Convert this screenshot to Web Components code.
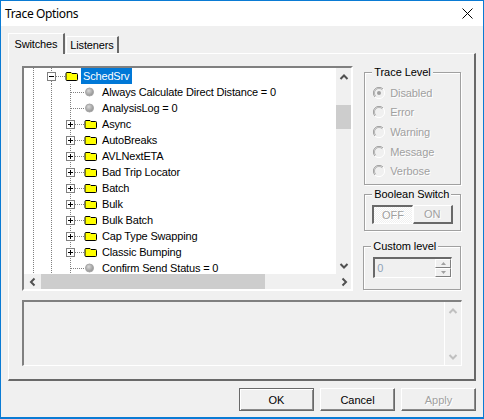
<!DOCTYPE html>
<html><head><meta charset="utf-8">
<style>
html,body{margin:0;padding:0;background:#f0f0f0}
body{font:11px "Liberation Sans",sans-serif;color:#000}
</style></head><body>
<trace-dialog></trace-dialog>
<script>
const FONT='"Liberation Sans",sans-serif';
function el(name,tpl){customElements.define(name,class extends HTMLElement{
  connectedCallback(){ if(this.shadowRoot)return; const s=this.attachShadow({mode:'open'}); s.innerHTML=tpl(this);}
});}
const dot='fill="none" stroke="#808080" stroke-dasharray="1 1"';
el('tree-row',h=>{
  const k=h.getAttribute('kind'),l=h.getAttribute('label');
  let svg='',w=78;
  const V=x=>`<path d="M${x} 0V16" ${dot}/>`;
  const H=(a,b)=>`<path d="M${a} 8.5H${b}" ${dot}/>`;
  const box=(cx,minus)=>`<rect x="${cx-4}" y="4.5" width="8" height="8" fill="#fff" stroke="#808080"/><path d="M${cx-2.5} 8.5h5${minus?'':`M${cx} 6v5`}" stroke="#000" fill="none"/>`;
  const folder=x=>`<path d="M${x+1} 12.5h9.5a1 1 0 0 0 1-1v-5a1 1 0 0 0-1-1h-4.5l-1-1h-4a1 1 0 0 0-1 1v6a1 1 0 0 0 1 1z" fill="#ff0" stroke="#000"/>`;
  if(k==='root'){w=57;svg=V(9.5)+`<path d="M27.5 0V4" ${dot}/><path d="M27.5 13V16" ${dot}/>`+H(32,42)+box(27.5,true)+folder(42);}
  else if(k==='folder'){svg=V(9.5)+V(27.5)+V(46.5)+H(51,60)+box(46.5,false)+folder(61);}
  else{svg=V(9.5)+V(27.5)+V(46.5)+H(47,60)+`<defs><radialGradient id="b" cx=".4" cy=".35" r=".7"><stop offset="0" stop-color="#d8d8d8"/><stop offset="1" stop-color="#8c8c8c"/></radialGradient></defs><circle cx="65.5" cy="8" r="4" fill="url(#b)" stroke="#a8a8a8"/>`;}
  return `<style>:host{display:flex;height:16px;align-items:stretch}
  svg{flex:none;display:block}
  .t{font:var(--tree-font);letter-spacing:-.17px;line-height:16px;white-space:nowrap;padding:0 ${k==='root'?'2px':'0'};${k==='root'?'background:#0078d7;color:#fff;width:47px;':''}}
  </style><svg width="${w}" height="16">${svg}</svg><span class="t">${l}</span>`;
});
const chev={up:'M-3.5 3L0 -.5L3.5 3',down:'M-3.5 -2L0 1.5L3.5 -2',left:'M2.5 -3.5L-1 0L2.5 3.5',right:'M-1.5 -3.5L2 0L-1.5 3.5'};
el('scroll-arrow',h=>{
  const d=h.getAttribute('dir'),dis=h.hasAttribute('disabled');
  return `<style>:host{display:block;flex:none;width:var(--sbw,16px);height:16px}svg{display:block}</style>
  <svg width="16" height="16" viewBox="-8 -8 16 16"><path d="${chev[d]}" fill="none" stroke="${dis?'#c0c0c0':'#505050'}" stroke-width="2"/></svg>`;
});
el('v-scroll',h=>{
  const dis=h.hasAttribute('disabled');const before=h.getAttribute('before')||0,th=h.getAttribute('thumb')||0;
  return `<style>:host{display:flex;flex-direction:column;width:var(--sbw,16px);background:#f0f0f0;flex:none}
  .b{height:${before}px}.th{height:${th}px;background:#cdcdcd}.f{flex:1}</style>
  <scroll-arrow dir="up" ${dis?'disabled':''}></scroll-arrow><div class="b"></div>${th>0?'<div class="th"></div>':''}<div class="f"></div><scroll-arrow dir="down" ${dis?'disabled':''}></scroll-arrow>`;
});
el('h-scroll',h=>`<style>:host{display:flex;height:15px;background:#f0f0f0;align-items:center;overflow:hidden}
  .th{height:15px;background:#cdcdcd;width:${h.getAttribute('thumb')}px;margin-left:2px}.f{flex:1}</style>
  <scroll-arrow dir="left"></scroll-arrow><div class="th"></div><div class="f"></div><scroll-arrow dir="right"></scroll-arrow>`);
el('group-box',h=>`<style>:host{display:block;font:var(--ui-font)}
  fieldset{margin:0;padding:0;border:1px solid #a0a0a0;box-shadow:1px 1px 0 #fff,inset 1px 1px 0 #fff;min-width:0;box-sizing:border-box;height:100%}
  legend{margin-left:7px;padding:0 2px;line-height:14px;background:#f0f0f0;letter-spacing:-.05px}
  </style><fieldset><legend>${h.getAttribute('title')}</legend><slot></slot></fieldset>`);
el('radio-opt',h=>{
  const c=h.hasAttribute('checked');
  return `<style>:host{display:flex;align-items:center;height:19.6px;font:var(--ui-font);letter-spacing:-.1px;color:#a0a0a0;text-shadow:1px 1px 0 #fff;gap:5px}svg{flex:none}</style>
  <svg width="12" height="12"><path d="M2 10A5.6 5.6 0 0 1 10 2" fill="none" stroke="#a0a0a0"/><path d="M2.8 9.2A4.5 4.5 0 0 1 9.2 2.8" fill="none" stroke="#707070" stroke-opacity=".45"/><path d="M10 2A5.6 5.6 0 0 1 2 10" fill="none" stroke="#fff"/>${c?'<circle cx="6" cy="6" r="2" fill="#a0a0a0"/>':''}</svg><span>${h.getAttribute('label')}</span>`;
});
el('toggle-btn',h=>{
  const p=h.hasAttribute('pressed');
  return `<style>:host{display:flex;align-items:center;justify-content:center;box-sizing:border-box;height:19px;flex:1;font:var(--ui-font);color:#a0a0a0;text-shadow:1px 1px 0 #fff;
  ${p?'background:repeating-conic-gradient(#fff 0 25%,#f0f0f0 0 50%) 0 0/2px 2px;border-style:solid;border-width:2px 1px 1px 2px;border-color:#696969 #fff #fff #696969;':
  'border-style:solid;border-width:1px 2px 2px 1px;border-color:#fff #696969 #696969 #fff;'}}</style>${h.getAttribute('label')}`;
});
el('spin-edit',h=>`<style>:host{display:flex;box-sizing:border-box;height:21px;border-style:solid;border-width:2px 1px 1px 2px;border-color:#696969 #fff #fff #696969;font:var(--ui-font);color:#8fa3b8;align-items:center;padding-left:2px}
  .v{flex:1}.s{display:flex;flex-direction:column;width:16px;height:18px;align-self:flex-start}
  .s div{box-sizing:border-box;height:9px;border-style:solid;border-width:1px;border-color:#fff #808080 #808080 #fff;display:flex;align-items:center;justify-content:center}
  svg{display:block}</style><span class="v">0</span><div class="s"><div><svg width="5" height="3"><path d="M2.5 0L5 3H0z" fill="#a0a0a0"/></svg></div><div><svg width="5" height="3"><path d="M0 0H5L2.5 3z" fill="#a0a0a0"/></svg></div></div>`);
el('push-btn',h=>{
  const dis=h.hasAttribute('disabled'),d=h.hasAttribute('default');
  return `<style>:host{display:flex;align-items:center;justify-content:center;box-sizing:border-box;width:75px;height:23px;font:var(--btn-font);background:#f0f0f0;
  border:1px solid;border-color:${d?'#696969':'#fff'} #696969 #696969 ${d?'#696969':'#fff'};box-shadow:${d?'inset 1px 1px 0 #fff,':''}inset -1px -1px 0 #8a8a8a;
  ${dis?'color:#a0a0a0;text-shadow:1px 1px 0 #fff;':''}}</style><slot></slot>`;
});
el('trace-dialog',()=>{
  const rows=[['root','SchedSrv'],['leaf','Always Calculate Direct Distance = 0'],['leaf','AnalysisLog = 0'],['folder','Async'],['folder','AutoBreaks'],['folder','AVLNextETA'],['folder','Bad Trip Locator'],['folder','Batch'],['folder','Bulk'],['folder','Bulk Batch'],['folder','Cap Type Swapping'],['folder','Classic Bumping'],['leaf','Confirm Send Status = 0']];
  return `<style>
  :host{display:flex;flex-direction:column;box-sizing:border-box;width:484px;height:419px;border:1px solid #0a7bd4;border-bottom-width:2px;background:#f0f0f0;
    --ui-font:11px ${FONT};--tree-font:11px ${FONT};--btn-font:11px ${FONT}}
  .title{flex:none;height:25px;background:#fff;display:flex;align-items:center;justify-content:space-between;padding:0 10px 0 4px;font:12px "Noto Sans",sans-serif;letter-spacing:-.35px}
  .tabs{flex:none;display:flex;align-items:flex-end;margin:7px 0 0 7px;height:20px;font:var(--btn-font);letter-spacing:-.15px}
  .tab{box-sizing:border-box;display:flex;align-items:center;justify-content:center;border-style:solid;border-width:1px 2px 0 1px;border-color:#fff #696969 #fff #fff}
  .tab.on{width:57px;height:21px;margin-bottom:-1px;position:relative;z-index:1;background:#f0f0f0}
  .tab.off{width:53px;height:17px;margin-left:1px}
  .panel{flex:none;box-sizing:border-box;margin:0 7px;height:328px;border-style:solid;border-width:1px 2px 2px 1px;border-color:#fff #696969 #696969 #fff;padding:12px 13px 0 13px;display:flex;flex-direction:column;gap:9px}
  .top{display:flex;height:225px;gap:11px}
  .tree{box-sizing:border-box;width:332px;height:225px;display:flex;flex-direction:column;border-style:solid;border-width:2px;border-color:#808080 #fff #fff #808080;--sbw:15px}
  .mid{flex:1;display:flex;min-height:0}
  .rows{flex:1;background:#fff;overflow:hidden;min-width:0}
  .side{width:97px;display:flex;flex-direction:column;margin-top:-1px}
  .tl{height:120px}.bs{height:44px;margin-top:2px}.cl{height:51px;margin-top:8px;margin-left:-1px}
  .radios{padding:0 0 0 8px;margin-top:4px}
  .tog{display:flex;margin:4px 7px 0 7px}
  .ed{margin:4px 8px 0 9px}
  .log{box-sizing:border-box;height:66px;width:440px;display:flex;justify-content:flex-end;border-style:solid;border-width:2px 1px 1px 2px;border-color:#808080 #fff #fff #808080}
  .log v-scroll{border-left:1px solid #fff}
  .foot{flex:none;display:flex;justify-content:flex-end;gap:6px;margin:7px 7px 0 0}
  </style>
  <div class="title"><span>Trace Options</span><svg width="11" height="11"><path d="M.5 .5L10.5 10.5M10.5 .5L.5 10.5" stroke="#000" fill="none"/></svg></div>
  <div class="tabs"><div class="tab on">Switches</div><div class="tab off">Listeners</div></div>
  <div class="panel">
    <div class="top">
      <div class="tree">
        <div class="mid"><div class="rows">${rows.map(r=>`<tree-row kind="${r[0]}" label="${r[1]}"></tree-row>`).join('')}</div><v-scroll before="21" thumb="24"></v-scroll></div>
        <h-scroll thumb="224"></h-scroll>
      </div>
      <div class="side">
        <group-box class="tl" title="Trace Level"><div class="radios"><radio-opt checked label="Disabled"></radio-opt><radio-opt label="Error"></radio-opt><radio-opt label="Warning"></radio-opt><radio-opt label="Message"></radio-opt><radio-opt label="Verbose"></radio-opt></div></group-box>
        <group-box class="bs" title="Boolean Switch"><div class="tog"><toggle-btn pressed label="OFF"></toggle-btn><toggle-btn label="ON"></toggle-btn></div></group-box>
        <group-box class="cl" title="Custom level"><div class="ed"><spin-edit></spin-edit></div></group-box>
      </div>
    </div>
    <div class="log"><v-scroll disabled></v-scroll></div>
  </div>
  <div class="foot"><push-btn default>OK</push-btn><push-btn>Cancel</push-btn><push-btn disabled>Apply</push-btn></div>`;
});
</script>
</body></html>
